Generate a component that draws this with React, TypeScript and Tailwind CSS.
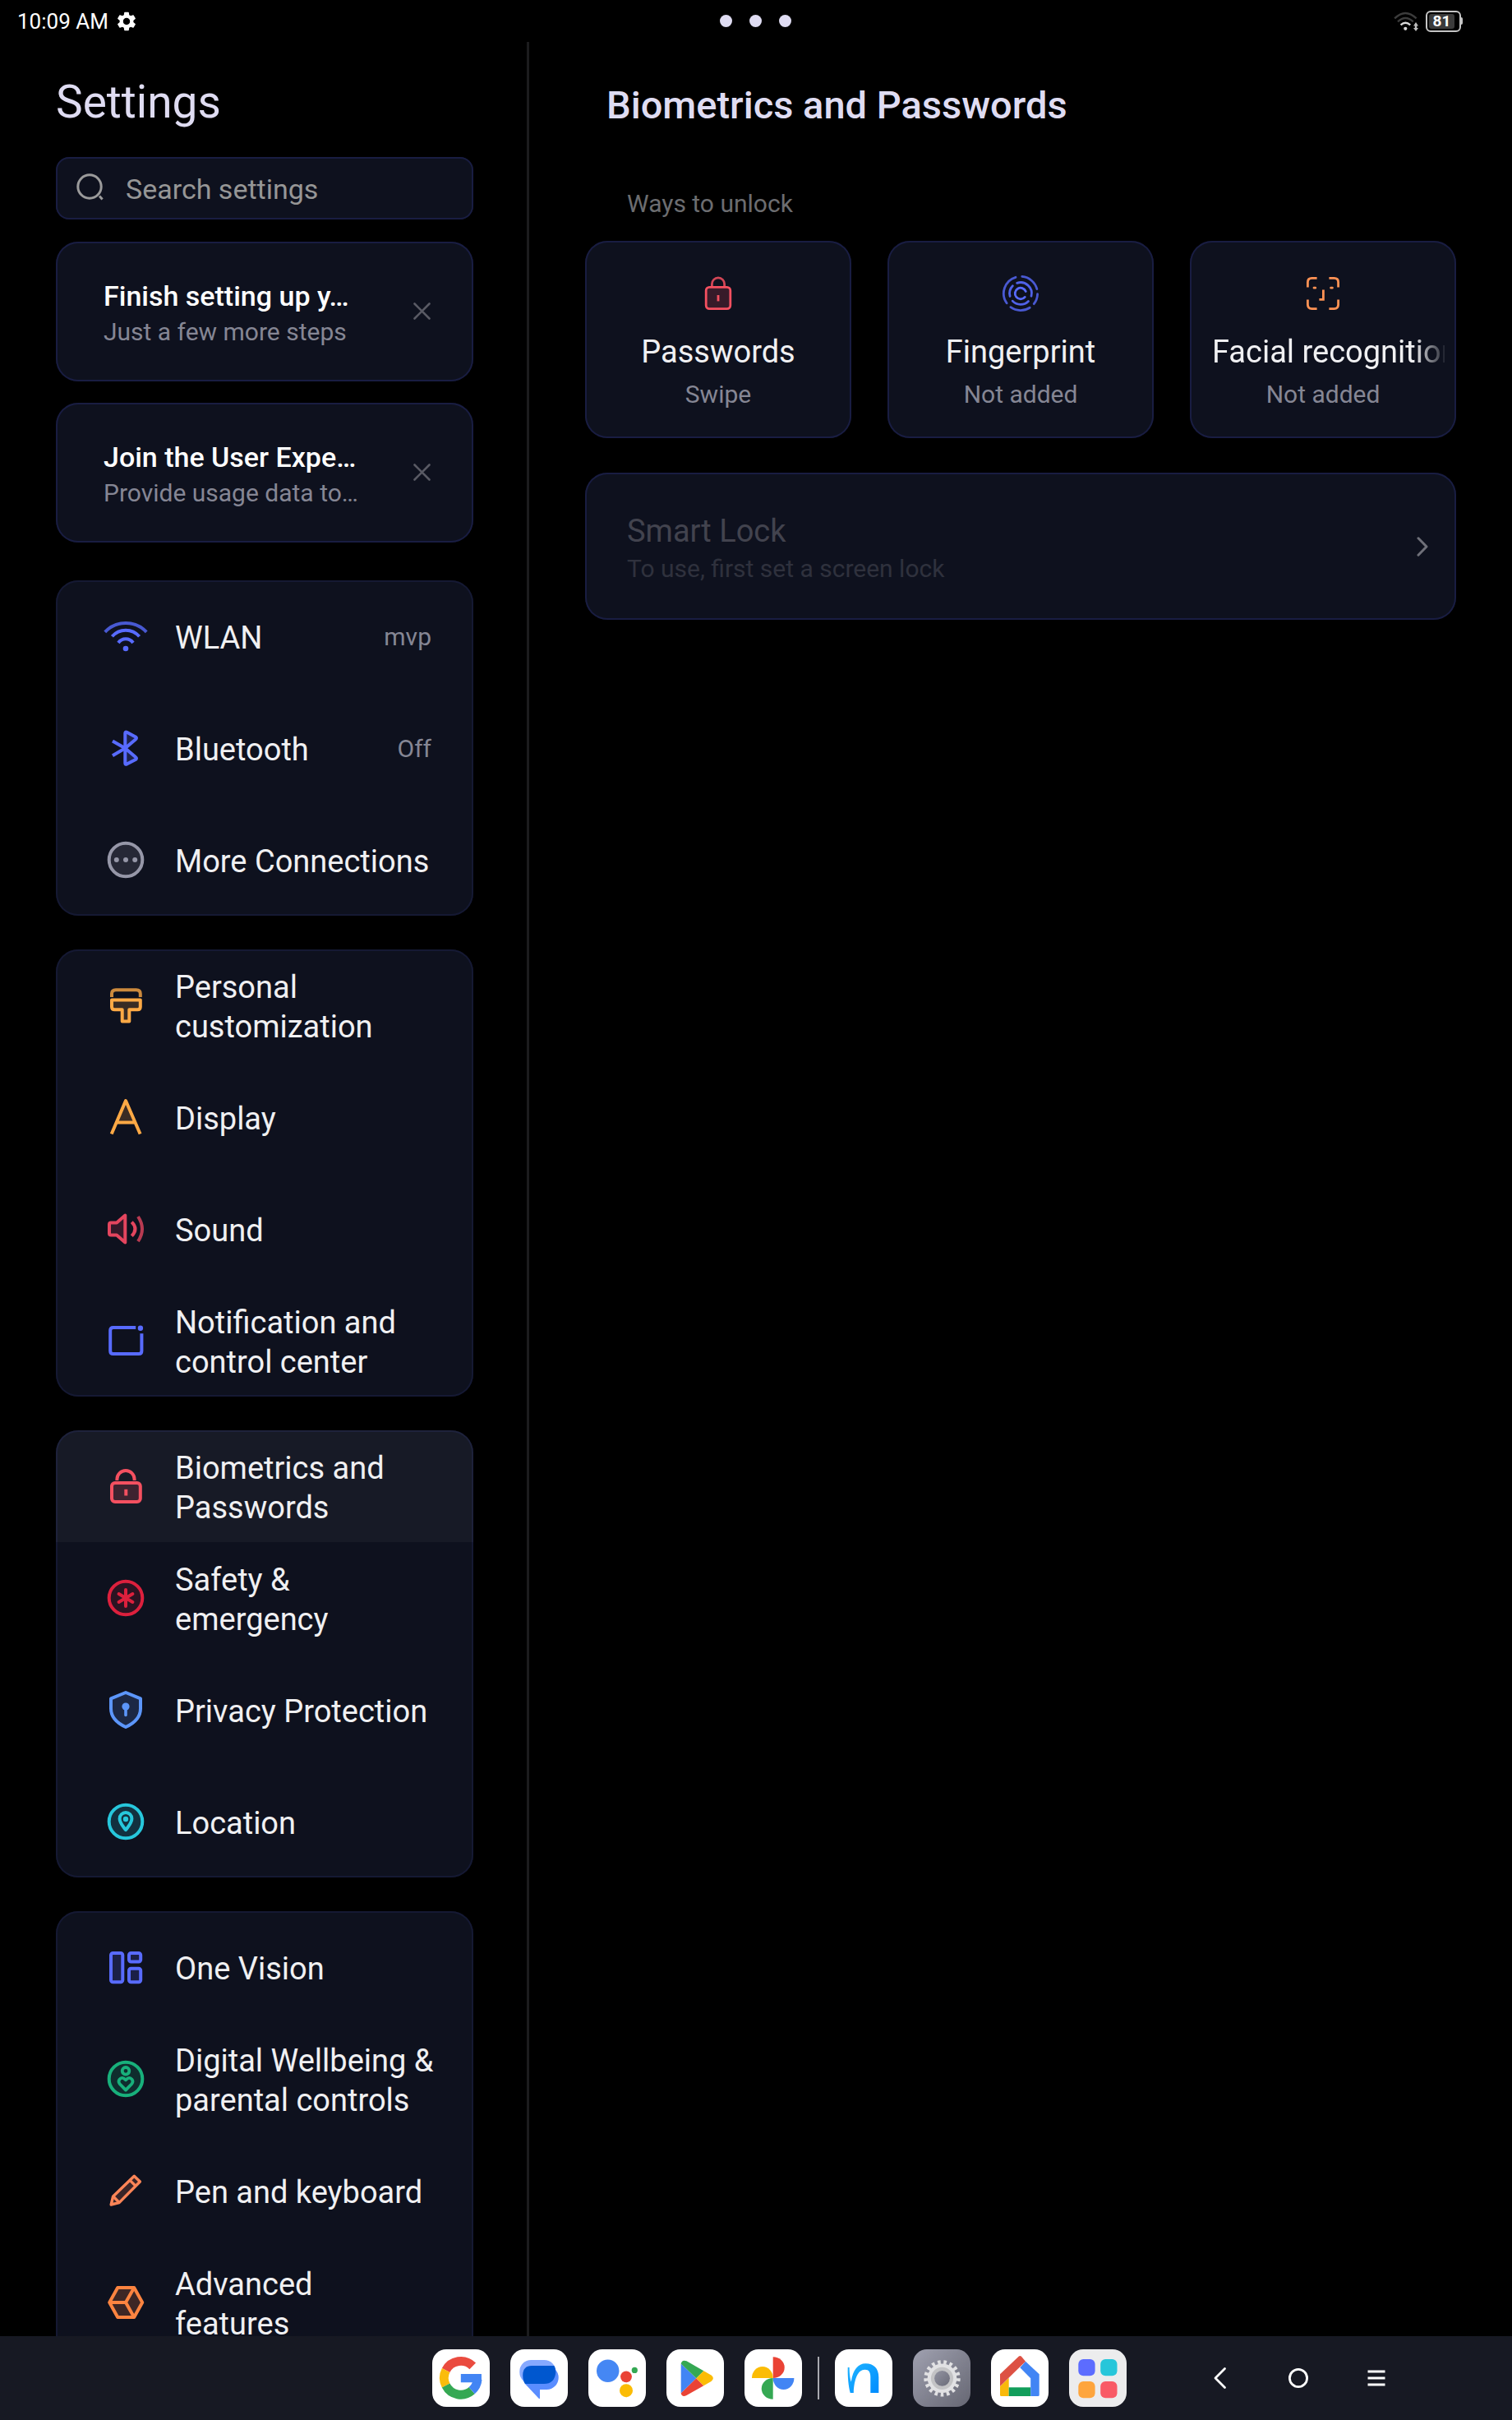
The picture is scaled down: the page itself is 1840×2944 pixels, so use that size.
import React from "react";

const arc = (c: number, r: number, from: number, to: number) => {
  const point = (deg: number) => {
    const a = (deg * Math.PI) / 180;
    return `${(c + r * Math.cos(a)).toFixed(2)} ${(c + r * Math.sin(a)).toFixed(2)}`;
  };
  return `M${point(from)}A${r} ${r} 0 ${to - from > 180 ? 1 : 0} 1 ${point(to)}`;
};

type IconProps = { color: string; children: React.ReactNode };

const RowIcon = ({ color, children }: IconProps) => (
  <svg viewBox="0 0 54 54" className="size-[54px] shrink-0" fill="none" stroke={color} strokeWidth={4} strokeLinejoin="round" aria-hidden="true">
    {children}
  </svg>
);

const WlanIcon = () => (
  <RowIcon color="#586bff">
    <path d="M1.8 21.8A34.8 34.8 0 0 1 52.2 21.8" opacity={0.8} />
    <path d="M10.4 27.3A21.9 21.9 0 0 1 43.6 27.3" />
    <path d="M18 35A11 11 0 0 1 36 35" />
    <circle cx="27" cy="42" r="3.3" fill="#586bff" stroke="none" />
  </RowIcon>
);

const BluetoothIcon = () => (
  <RowIcon color="#586bff">
    <path d="M26.3 27.2V9Q26.3 7 28.3 7.8L39 13.4Q41 14.8 39 16.4ZM26.3 27.2V45.4Q26.3 47.4 28.3 46.6L39 41Q41 39.6 39 38Z" fill="#586bff" fillOpacity={0.2} />
    <path d="M11 18.4L26.3 27.2L11 36.2" />
  </RowIcon>
);

const MoreIcon = () => (
  <RowIcon color="#9697a8">
    <circle cx="27" cy="27" r="20.3" fill="#9697a8" fillOpacity={0.18} />
    <g fill="#9697a8" stroke="none">
      <circle cx="15.8" cy="27" r="3" />
      <circle cx="27" cy="27" r="3" />
      <circle cx="38.2" cy="27" r="3" />
    </g>
  </RowIcon>
);

const BrushIcon = () => (
  <RowIcon color="#fda945">
    <path d="M10 17V13Q10 8.2 15 8.2H39.8Q44.8 8.2 44.8 13V17" opacity={0.8} />
    <path d="M10 20.6H44.8V28.8Q44.8 32.3 41.3 32.3H31.3V46.4H22.7V32.3H13.5Q10 32.3 10 28.8Z" fill="#fda945" fillOpacity={0.18} />
  </RowIcon>
);

const DisplayIcon = () => (
  <RowIcon color="#fda945">
    <path d="M15 33L27 7L39.5 33Z" fill="#fda945" fillOpacity={0.18} stroke="none" />
    <path d="M9.7 47.5L27 7L44.6 47.5M15.5 33.5H38.8" />
  </RowIcon>
);

const SoundIcon = () => (
  <RowIcon color="#e4455e">
    <path d="M9 19.5H16L26.3 10.5V43.5L16 34.5H9Q7 34.5 7 32.5V21.5Q7 19.5 9 19.5Z" fill="#e4455e" fillOpacity={0.18} />
    <path d="M34.3 18.6Q42.6 27 34.3 35.6" />
    <path d="M42 12Q52 27 42 42.2" opacity={0.8} />
  </RowIcon>
);

const NotificationIcon = () => (
  <RowIcon color="#586bff">
    <path d="M39.2 11H11.8Q8.2 11 8.2 14.6V39.4Q8.2 43 11.8 43H42.8Q46.4 43 46.4 39.4V18.2" />
    <circle cx="44.9" cy="11.7" r="3.2" fill="#586bff" stroke="none" />
  </RowIcon>
);

const LockIcon = () => (
  <RowIcon color="#f45060">
    <path d="M16.4 20V18.6A10.6 10.6 0 0 1 37.6 18.6V20" />
    <rect x="10" y="23" width="34.8" height="23" rx="4" fill="#f45060" fillOpacity={0.18} />
    <path d="M27.3 30.8V38.5" />
  </RowIcon>
);

const SafetyIcon = () => (
  <RowIcon color="#dd203d">
    <circle cx="27" cy="27" r="20.3" fill="#dd203d" fillOpacity={0.15} />
    <path d="M27 17V37M18.6 22L35.4 32M35.4 22L18.6 32" strokeLinecap="round" />
  </RowIcon>
);

const PrivacyIcon = () => (
  <RowIcon color="#5c96fa">
    <path d="M27 6L45 13.4V25.5C45 36 38 43 27 48C16 43 9 36 9 25.5V13.4Z" fill="#5c96fa" fillOpacity={0.18} />
    <circle cx="27" cy="23" r="4.6" fill="#5c96fa" stroke="none" />
    <path d="M27 24V33.5" strokeWidth={3.6} strokeLinecap="round" />
  </RowIcon>
);

const LocationIcon = () => (
  <RowIcon color="#27c7dc">
    <circle cx="27" cy="27" r="20.3" fill="#27c7dc" fillOpacity={0.18} />
    <path d="M27 37.2C24 33 19.6 28.6 19.6 23.4A7.4 7.4 0 0 1 34.4 23.4C34.4 28.6 30 33 27 37.2Z" />
    <circle cx="27" cy="24" r="3.2" fill="#27c7dc" stroke="none" />
  </RowIcon>
);

const VisionIcon = () => (
  <RowIcon color="#586bff">
    <g fill="#586bff" fillOpacity={0.18}>
      <rect x="9" y="10" width="14.3" height="35.3" rx="2.5" />
      <rect x="31" y="10" width="14.2" height="10.6" rx="2.5" />
      <rect x="31" y="28.8" width="14.2" height="16.5" rx="2.5" />
    </g>
  </RowIcon>
);

const WellbeingIcon = () => (
  <RowIcon color="#18b07b">
    <circle cx="27" cy="27" r="20.3" fill="#18b07b" fillOpacity={0.18} />
    <circle cx="27" cy="17.3" r="4.3" strokeWidth={3.8} />
    <path d="M27 40.6L19.8 33.2C16.6 29.4 20.5 24.5 24.6 26.4L27 28.4L29.4 26.4C33.5 24.5 37.4 29.4 34.2 33.2Z" strokeWidth={3.8} />
  </RowIcon>
);

const PencilIcon = () => (
  <RowIcon color="#fe8557">
    <path d="M9.2 44L11.6 34L37.3 9.2L44.4 16L19 41.6Z" fill="#fe8557" fillOpacity={0.18} strokeWidth={3.4} />
    <path d="M32 14.4L39.2 21.4M12 34.2L19 41.4" strokeWidth={3.4} />
  </RowIcon>
);

const AdvancedIcon = () => (
  <RowIcon color="#fc8440">
    <path d="M7.2 27L17.2 9H37.2L47.2 27L37.2 45H17.2Z" fill="#fc8440" fillOpacity={0.2} />
    <path d="M7.2 27H27L37.2 9M27 27L37.2 45" />
  </RowIcon>
);

const notices = [
  { title: "Finish setting up y…", text: "Just a few more steps" },
  { title: "Join the User Expe…", text: "Provide usage data to…" },
];

type Item = { label: string; icon: React.ReactNode; value?: string; active?: boolean };

const groups: Item[][] = [
  [
    { label: "WLAN", icon: <WlanIcon />, value: "mvp" },
    { label: "Bluetooth", icon: <BluetoothIcon />, value: "Off" },
    { label: "More Connections", icon: <MoreIcon /> },
  ],
  [
    { label: "Personal customization", icon: <BrushIcon /> },
    { label: "Display", icon: <DisplayIcon /> },
    { label: "Sound", icon: <SoundIcon /> },
    { label: "Notification and control center", icon: <NotificationIcon /> },
  ],
  [
    { label: "Biometrics and Passwords", icon: <LockIcon />, active: true },
    { label: "Safety & emergency", icon: <SafetyIcon /> },
    { label: "Privacy Protection", icon: <PrivacyIcon /> },
    { label: "Location", icon: <LocationIcon /> },
  ],
  [
    { label: "One Vision", icon: <VisionIcon /> },
    { label: "Digital Wellbeing & parental controls", icon: <WellbeingIcon /> },
    { label: "Pen and keyboard", icon: <PencilIcon /> },
    { label: "Advanced\nfeatures", icon: <AdvancedIcon /> },
  ],
];

const StatusBar = () => (
  <header className="grid h-[51px] shrink-0 grid-cols-3 items-center pl-[21px] pr-[60px] text-white">
    <div className="flex items-center gap-2 text-[26px] leading-[30px]">
      <span>10:09 AM</span>
      <svg viewBox="0 0 24 24" className="size-7" fill="white" aria-hidden="true">
        <path d="M19.14 12.94c.04-.3.06-.61.06-.94 0-.32-.02-.64-.07-.94l2.03-1.58a.49.49 0 0 0 .12-.61l-1.92-3.32a.488.488 0 0 0-.59-.22l-2.39.96c-.5-.38-1.03-.7-1.62-.94l-.36-2.54a.484.484 0 0 0-.48-.41h-3.84c-.24 0-.43.17-.47.41l-.36 2.54c-.59.24-1.13.57-1.62.94l-2.39-.96c-.22-.08-.47 0-.59.22L2.74 8.87c-.12.21-.08.47.12.61l2.03 1.58c-.05.3-.09.63-.09.94s.02.64.07.94l-2.03 1.58a.49.49 0 0 0-.12.61l1.92 3.32c.12.22.37.29.59.22l2.39-.96c.5.38 1.03.7 1.62.94l.36 2.54c.05.24.24.41.48.41h3.84c.24 0 .44-.17.47-.41l.36-2.54c.59-.24 1.13-.56 1.62-.94l2.39.96c.22.08.47 0 .59-.22l1.92-3.32c.12-.22.07-.47-.12-.61l-2.01-1.58zM12 15.6c-1.98 0-3.6-1.62-3.6-3.6s1.62-3.6 3.6-3.6 3.6 1.62 3.6 3.6-1.62 3.6-3.6 3.6z" />
      </svg>
    </div>
    <div className="flex justify-center gap-[21px] pl-[38px]">
      <span className="size-[15px] rounded-full bg-[#dfdcf2]" />
      <span className="size-[15px] rounded-full bg-[#dfdcf2]" />
      <span className="size-[15px] rounded-full bg-[#dfdcf2]" />
    </div>
    <div className="flex items-center justify-end gap-2">
      <svg viewBox="0 0 31 26" className="h-[26px] w-[31px]" fill="none" strokeWidth={2.4} aria-hidden="true">
        <path d="M1.2 9.4Q14.3-3.6 27.6 9.4" stroke="#3c3c3c" />
        <path d="M5 13.4Q14.3 4.6 23.8 13.4" stroke="#3c3c3c" />
        <path d="M8.6 17.4Q14.3 12 20.2 17.4" stroke="#d9d9d9" />
        <circle cx="14.3" cy="21.8" r="2.1" fill="#d9d9d9" />
        <path d="M27 14L30 18.4H28.2V21H30L27 25L24 21H25.8V18.4H24Z" fill="#bdbdbd" />
      </svg>
      <div className="flex items-center">
        <div className="flex h-[26px] w-[43px] items-center rounded-[6px] border-2 border-[#c4c4c4] p-[2px]">
          <div className="flex h-full w-[31px] items-center justify-center rounded-[3px] bg-[#3b3b3b] text-[19px] leading-[18px] font-bold">81</div>
        </div>
        <span className="h-[9px] w-[2px] rounded-r-full bg-[#c4c4c4]" />
      </div>
    </div>
  </header>
);

const Sidebar = () => (
  <aside className="flex w-[35%] flex-col overflow-hidden border-r-[3px] border-[#1c1c1e] pl-[68px] pr-[65px]">
    <h1 className="mt-[41px] text-[55px] leading-[64px] text-[#dfdcf2]">Settings</h1>
    <label className="mt-[35px] flex h-[76px] shrink-0 items-center gap-[26px] rounded-[16px] bg-[#0e111e] pl-[23px] ring-2 ring-[#191d42] ring-inset">
      <svg viewBox="0 0 36 36" className="size-9 shrink-0" fill="none" stroke="#9b9b9b" strokeWidth={3} aria-hidden="true">
        <circle cx="18" cy="16" r="14.2" />
        <path d="M30 27.5L33.6 31.4" />
      </svg>
      <input type="search" placeholder="Search settings" className="w-full min-w-0 bg-transparent pt-[2px] pr-6 text-[34px] leading-10 text-white outline-none placeholder:text-[#969696]" />
    </label>

    <div className="mt-[27px] flex shrink-0 flex-col gap-[26px]">
      {notices.map((notice) => (
        <section key={notice.title} className="flex h-[170px] items-start rounded-[27px] bg-[#0e111e] pr-[52px] pl-[58px] pt-11 ring-2 ring-[#191d42] ring-inset">
          <div className="min-w-0 flex-1">
            <h2 className="text-[34px] leading-[44px] font-medium whitespace-nowrap text-white">{notice.title}</h2>
            <p className="text-[30px] leading-[44px] whitespace-nowrap text-[#858694]">{notice.text}</p>
          </div>
          <button type="button" aria-label="Dismiss" className="mt-[30px]">
            <svg viewBox="0 0 21 21" className="size-[21px]" stroke="#595a64" strokeWidth={2.6} strokeLinecap="round" aria-hidden="true">
              <path d="M1.5 1.5L19.5 19.5M19.5 1.5L1.5 19.5" />
            </svg>
          </button>
        </section>
      ))}
    </div>

    <nav className="mt-[46px] flex shrink-0 flex-col gap-[41px]">
      {groups.map((group) => (
        <ul key={group[0].label} className="overflow-hidden rounded-[27px] bg-[#0e111e] ring-2 ring-[#151933] ring-inset">
          {group.map((item) => (
            <li key={item.label}>
              <a href="#" className={`flex h-[136px] items-center pr-10 pl-[58px] ${item.active ? "bg-white/4" : ""}`}>
                {item.icon}
                <span className="flex-1 pt-1 pl-[33px] text-[38px] leading-[48px] whitespace-pre-line text-[#f0f0f2]">{item.label}</span>
                {item.value && <span className="pt-[2px] pr-[11px] text-[30px] leading-[40px] text-[#858694]">{item.value}</span>}
              </a>
            </li>
          ))}
        </ul>
      ))}
    </nav>
  </aside>
);

const unlockWays = [
  {
    title: "Passwords",
    status: "Swipe",
    icon: (
      <g stroke="#f45060">
        <path d="M16.4 16V12.5A7.6 7.6 0 0 1 31.6 12.5V16" opacity={0.85} />
        <rect x="9.2" y="16.4" width="29.6" height="26.2" rx="4" fill="#f45060" fillOpacity={0.18} />
        <path d="M24 26V33.4" />
      </g>
    ),
  },
  {
    title: "Fingerprint",
    status: "Not added",
    icon: (
      <g stroke="#586bff" strokeLinecap="round">
        <g opacity={0.8}>
          <path d={arc(24, 20.6, 145, 253)} />
          <path d={arc(24, 20.6, 275, 345)} />
          <path d={arc(24, 20.6, 2, 38)} />
          <path d={arc(24, 20.6, 57, 126)} />
        </g>
        <path d={arc(24, 13.4, 251, 374)} opacity={0.9} />
        <path d={arc(24, 13.4, 165, 224)} opacity={0.9} />
        <path d={arc(24, 13.4, 45, 137)} opacity={0.9} />
        <path d={arc(24, 6.8, 40, 338)} />
      </g>
    ),
  },
  {
    title: "Facial recognition",
    status: "Not added",
    icon: (
      <g stroke="#ff9254">
        <path d="M5.4 16.6V10.4Q5.4 5.4 10.4 5.4H16.6M31.4 5.4H37.6Q42.6 5.4 42.6 10.4V16.6M42.6 31.4V37.6Q42.6 42.6 37.6 42.6H31.4M16.6 42.6H10.4Q5.4 42.6 5.4 37.6V31.4" />
        <path d="M24.4 19.4V31.4H19.4" />
        <path d="M13 17.2H14.8M33.6 17.2H35.4" strokeLinecap="round" />
      </g>
    ),
  },
];

const Detail = () => (
  <main className="min-w-0 flex-1 px-[68px]">
    <h2 className="mt-[45px] pl-[26px] text-[47px] leading-[64px] font-medium text-[#dfdcf2]">Biometrics and Passwords</h2>
    <h3 className="mt-[68px] pl-[51px] text-[30px] leading-10 text-[#6c6d70]">Ways to unlock</h3>
    <div className="mt-[25px] grid grid-cols-3 gap-11">
      {unlockWays.map((way) => (
        <button key={way.title} type="button" className="flex h-60 min-w-0 flex-col items-center rounded-[27px] bg-[#0e111e] pt-10 ring-2 ring-[#191d42] ring-inset">
          <svg viewBox="0 0 48 48" className="size-12 shrink-0" fill="none" strokeWidth={2.8} aria-hidden="true">
            {way.icon}
          </svg>
          <span
            className={
              way.title === "Facial recognition"
                ? "mt-[22px] w-full overflow-hidden border-r-[14px] border-transparent mask-r-from-84% mask-r-to-97% pl-[27px] text-left text-[38px] leading-[50px] whitespace-nowrap text-[#f0f0f2]"
                : "mt-[22px] text-[38px] leading-[50px] whitespace-nowrap text-[#f0f0f2]"
            }
          >
            {way.title}
          </span>
          <span className="mt-[7px] text-[30px] leading-10 text-[#858694]">{way.status}</span>
        </button>
      ))}
    </div>
    <button type="button" disabled className="mt-[42px] flex h-[179px] w-full items-center justify-between rounded-[27px] bg-[#0e111e] pr-[33px] pl-[51px] text-left ring-2 ring-[#191d42] ring-inset">
      <span className="flex flex-col pt-[6px]">
        <span className="text-[38px] leading-[48px] text-[#42434e]">Smart Lock</span>
        <span className="text-[30px] leading-[44px] text-[#2f313d]">To use, first set a screen lock</span>
      </span>
      <svg viewBox="0 0 16 24" className="h-6 w-4" fill="none" stroke="#6f7079" strokeWidth={3} strokeLinecap="round" strokeLinejoin="round" aria-hidden="true">
        <path d="M3 1.8L13 12L3 22.2" />
      </svg>
    </button>
  </main>
);

const apps = [
  {
    name: "Google",
    art: (
      <g fill="none" strokeWidth={10.8}>
        <path d={arc(34.8, 20.4, 207, 315)} stroke="#ea4b3f" />
        <path d={arc(34.8, 20.4, 153, 207)} stroke="#fbbc0c" />
        <path d={arc(34.8, 20.4, 49, 153)} stroke="#35a853" />
        <path d={arc(34.8, 20.4, 5, 49)} stroke="#4285f4" />
        <path d="M34.8 30H59.9L60 40.3H34.8Z" fill="#4285f4" stroke="none" />
      </g>
    ),
  },
  {
    name: "Messages",
    art: (
      <>
        <rect x="11.3" y="13" width="44" height="29" rx="14" fill="#86a9ff" />
        <path d="M27 20H44.2A14.5 14.5 0 0 1 44.2 49H36V59Q36 61 34.4 59.6L18.4 42.6Q15.3 38.5 15.3 31.5Q15.3 20 27 20Z" fill="#5a8dff" />
        <path d="M26.5 20H53.4Q55.3 23.5 55.3 28Q54 42 41 42H18Q15.3 38 15.3 31.5Q15.3 20 26.5 20Z" fill="#0057cf" />
      </>
    ),
  },
  {
    name: "Assistant",
    art: (
      <>
        <circle cx="23.7" cy="26.3" r="13.7" fill="#4587f4" />
        <circle cx="46" cy="33.3" r="6.9" fill="#ea4335" />
        <circle cx="56.3" cy="25.4" r="3.6" fill="#34a853" />
        <circle cx="46" cy="50.2" r="8" fill="#fbbc05" />
      </>
    ),
  },
  {
    name: "Play Store",
    art: (
      <>
        <path d="M17.7 17.5V53.5L36.3 35.3Z" fill="#4285f4" />
        <path d="M17.7 17.5Q18.8 12.2 24.5 14.2L45.3 26.3L36.3 35.3Z" fill="#35a853" />
        <path d="M17.7 53.5Q18.8 58.6 24.5 56L45.3 44.3L36.3 35.3Z" fill="#ea4335" />
        <path d="M45.3 26.3L54.5 31.6Q59.3 35.3 54.5 39L45.3 44.3L36.3 35.3Z" fill="#fbbc05" />
      </>
    ),
  },
  {
    name: "Photos",
    art: (
      <>
        <path d="M34.7 9.3A14 12.85 0 0 1 34.7 35Z" fill="#ea4335" />
        <path d="M34.7 35A12.85 14 0 0 0 60.4 35Z" fill="#4285f4" />
        <path d="M34.7 35A14 12.85 0 0 0 34.7 60.7Z" fill="#35a853" />
        <path d="M9 35A12.85 14 0 0 1 34.7 35Z" fill="#fbbc05" />
      </>
    ),
  },
  {
    name: "Notes",
    art: (
      <>
        <linearGradient id="notes" x1="0" y1="0" x2="1" y2="1">
          <stop offset="0" stopColor="#1fb4ff" />
          <stop offset="1" stopColor="#008cff" />
        </linearGradient>
        <path d="M15.7 22H17.6C17.7 29 18.4 36 19.8 39.5C22 25 28 17.3 37.5 17.3C47 17.3 53.3 23 53.3 34V53H43.3V34C43.3 28 41.5 24.8 36.5 24.8C28 24.8 23.5 36 22.8 53H18.7C16.5 45 15.4 33 15.7 22Z" fill="url(#notes)" />
      </>
    ),
  },
  {
    name: "Settings",
    bg: "bg-linear-to-br from-[#a0a1b0] to-[#666773]",
    art: (
      <>
        <linearGradient id="hub" x1="0" y1="0" x2="1" y2="1">
          <stop offset="0" stopColor="#9394a2" />
          <stop offset="1" stopColor="#6b6c79" />
        </linearGradient>
        <circle cx="35.5" cy="35.3" r="19.4" fill="none" stroke="#e1e1e3" strokeWidth={5.6} pathLength={34} strokeDasharray="1 1" />
        <circle cx="35.5" cy="35.3" r="17.8" fill="#e1e1e3" />
        <circle cx="35.5" cy="35.3" r="13.6" fill="#c3c3c5" />
        <circle cx="35.5" cy="35.3" r="9.4" fill="url(#hub)" />
      </>
    ),
  },
  {
    name: "Home",
    art: (
      <>
        <path d="M11 45L21.7 34.8V57H12.5Q11 57 11 55.5Z" fill="#f9b90a" />
        <path d="M21.7 46.3H48.2V57H21.7Z" fill="#129e5b" />
        <path d="M42 14.7L58.7 30.3V55.5Q58.7 57 57.2 57H48.2V35.3L35.3 22.3Z" fill="#4285f4" />
        <path d="M11 30.3L33.6 8.7Q35.3 7.2 37 8.7L42 14.7L11 45Z" fill="#dd5144" />
      </>
    ),
  },
  {
    name: "All apps",
    bg: "bg-[#ececed]",
    art: (
      <>
        <rect x="11.3" y="12" width="20.3" height="20.3" rx="6" fill="#5c6cff" />
        <rect x="38.2" y="12" width="20.3" height="20.3" rx="6" fill="#27c6da" />
        <rect x="11.3" y="39" width="20.3" height="20.3" rx="6" fill="#fea53d" />
        <rect x="38.2" y="39" width="20.3" height="20.3" rx="6" fill="#f95a66" />
      </>
    ),
  },
];

const AppButton = ({ name, bg = "bg-white", art }: { name: string; bg?: string; art: React.ReactNode }) => (
  <button type="button" aria-label={name} className={`size-[70px] rounded-[17px] ${bg}`}>
    <svg viewBox="0 0 70 70" className="size-full" aria-hidden="true">
      {art}
    </svg>
  </button>
);

const Taskbar = () => (
  <footer className="flex h-[102px] shrink-0 items-center justify-end bg-[#171923] pr-[118px]">
    <div className="flex items-center gap-[25px]">
      {apps.slice(0, 5).map((app) => (
        <AppButton key={app.name} {...app} />
      ))}
    </div>
    <span className="mx-[19px] h-[52px] w-[2px] bg-[#a9a9b0]" />
    <div className="flex items-center gap-[25px]">
      {apps.slice(5).map((app) => (
        <AppButton key={app.name} {...app} />
      ))}
    </div>
    <div className="ml-[66px] flex">
      <button type="button" aria-label="Back" className="flex h-[102px] w-[95px] items-center justify-center">
        <svg viewBox="0 0 28 28" className="size-7" fill="none" stroke="white" strokeWidth={2.8} strokeLinecap="round" strokeLinejoin="round">
          <path d="M19.5 2.5L8 14L19.5 25.5" />
        </svg>
      </button>
      <button type="button" aria-label="Home" className="flex h-[102px] w-[95px] items-center justify-center">
        <svg viewBox="0 0 28 28" className="size-7" fill="none" stroke="white" strokeWidth={2.8}>
          <circle cx="14" cy="14" r="10.6" />
        </svg>
      </button>
      <button type="button" aria-label="Recent apps" className="flex h-[102px] w-[95px] items-center justify-center">
        <svg viewBox="0 0 28 28" className="size-7" stroke="white" strokeWidth={3}>
          <path d="M3.5 6H24.5M3.5 14H24.5M3.5 22H24.5" />
        </svg>
      </button>
    </div>
  </footer>
);

const App = () => {
  return (
    <div className="flex h-screen flex-col overflow-hidden bg-black font-[Roboto,'Noto_Sans',sans-serif]">
      <StatusBar />
      <div className="flex min-h-0 flex-1">
        <Sidebar />
        <Detail />
      </div>
      <Taskbar />
    </div>
  );
};

export default App;
